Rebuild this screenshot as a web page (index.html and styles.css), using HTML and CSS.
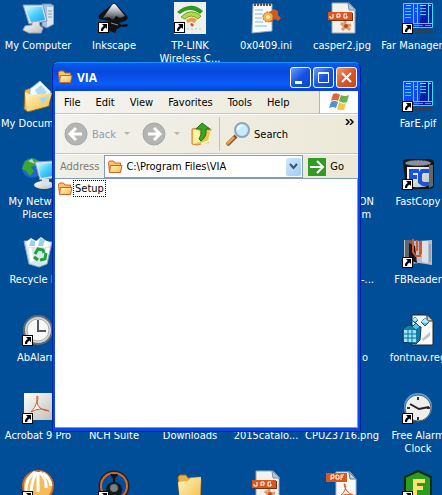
FILE: index.html
```
<!DOCTYPE html>
<html lang="en">

<head>
  <meta charset="UTF-8" />
  <meta name="viewport" content="width=device-width, initial-scale=1.0" />
  <title>VIA</title>
  <link rel="stylesheet" href="styles.css">
</head>

<body>
  <!-- shared icons -->
  <svg class="defs" aria-hidden="true">
    <defs>
      <linearGradient id="gFolder" x1="0" y1="0" x2="1" y2="1">
        <stop offset="0" stop-color="#fff6c0" />
        <stop offset="1" stop-color="#f0bd48" />
      </linearGradient>
      <linearGradient id="gScreen" x1="0" y1="0" x2="1" y2="1">
        <stop offset="0" stop-color="#d8fbff" />
        <stop offset="0.5" stop-color="#48d0ff" />
        <stop offset="1" stop-color="#2499e8" />
      </linearGradient>
      <linearGradient id="gMetal" x1="0" y1="0" x2="1" y2="1">
        <stop offset="0" stop-color="#ffffff" />
        <stop offset="1" stop-color="#bdbdb8" />
      </linearGradient>
      <linearGradient id="gInk" x1="0" y1="0" x2="0" y2="1">
        <stop offset="0" stop-color="#ffffff" />
        <stop offset="0.5" stop-color="#a0a8b0" />
        <stop offset="1" stop-color="#333333" />
      </linearGradient>
    </defs>
    <symbol id="arrow" viewBox="0 0 11 11">
      <path d="M0 0h11v11H0z" fill="#000" />
      <path d="M1 1h9v9H1z" fill="#fff" />
      <path d="M4 2h5v5L7.500 5.500Q5 6.500 5 9H3Q2.500 6 5.800 3.900z" fill="#000" />
    </symbol>
    <symbol id="folder" viewBox="0 0 16 16">
      <path d="M1.500 3.500l1-1.500h4l1.500 2h5.500v9h-11z" fill="#f5c860" stroke="#d0602a" />
      <path d="M3.500 6.500h11.500l-1.500 7h-11z" fill="url(#gFolder)" stroke="#d0602a" />
    </symbol>
    <symbol id="computer" viewBox="0 0 32 32">
      <path d="M20 2l9 0 3 2v18l-7 4-5-2z" fill="#a9c1dd" stroke="#718eb5" />
      <path d="M25 5h6v17l-6 3z" fill="#dde4ed" />
      <path d="M26 9h4M26 12h4M26 15h4" stroke="#86a0bf" />
      <path d="M1 3l20 0 4 16-18 3z" fill="#d6e5f4" stroke="#8199b7" />
      <path d="M3 5l17 0 3 13-14 2z" fill="url(#gScreen)" />
      <path d="M10 20l7-1 1 5 3 2-2 5-12 0-6-3 2-4 7-1z" fill="url(#gMetal)" stroke="#a0a4ad" />
    </symbol>
    <symbol id="jpg" viewBox="0 0 32 32">
      <path d="M6 1h17l6 6v24H6z" fill="#f1f1ee" stroke="#9ea5ae" />
      <path d="M22 1l1 7 7 0z" fill="#b9c6d7" stroke="#7591b1" />
      <path d="M18 24l-3-3m4 3l0-5m1 5l5-1m-5 1l4 4m-4-4l-4 4" stroke="#e29a65" stroke-width="3" />
      <circle cx="20" cy="24" r="2" fill="#b84c20" />
      <path d="M3 11h24v8H3z" fill="#7e2e0e" />
      <path d="M2 10h24v8H2z" fill="#d7591f" />
      <path d="M7 12v4H4v-2M11 16v-4h3v3h-3M21 12h-3v4h3v-2h-1" fill="none" stroke="#fff" />
    </symbol>
    <symbol id="far" viewBox="0 0 32 32">
      <path d="M1 1h30v24H1z" fill="#0b4cf2" />
      <path d="M21 1h10v24H17z" fill="#0a1ca3" />
      <path d="M1.500 1.500h29v24h-29zM1 21.500h30M11.500 1v20M15.500 1v20M26.500 1v20" fill="none" stroke="#35dff4" />
      <path d="M4 3.500h5M18 3.500h6M27 3.500h2" stroke="#e6d860" />
      <path d="M3 6.500h6M3 9.500h6M3 12.500h6M3 15.500h6M18 6.500h6M18 9.500h6M18 12.500h6M13 6.500h2M13 9.500h2" stroke="#35d8f0" />
      <path d="M12 23.500h9M23 23.500h6" stroke="#20a8ff" />
      <path d="M12 28.500h18M13 30.500h18" stroke="#333d48" stroke-dasharray="3 1" />
    </symbol>
    <symbol id="clock" viewBox="0 0 32 32">
      <circle cx="16" cy="16" r="14" fill="#d6d8d8" stroke="#696d72" stroke-width="2" />
      <circle cx="16" cy="16" r="11" fill="#f8f8f5" stroke="#aaaeb2" />
      <path d="M16 6v11h8" fill="none" stroke="#556" stroke-width="2" />
    </symbol>
    <symbol id="bigfolder" viewBox="0 0 32 32">
      <path d="M4 7l2-2h6l2 3 11-1 2 2-1 22-20 1z" fill="#e9b344" stroke="#a66b20" />
      <path d="M4 12l10-1 3-3 10-1-1 23-20 1z" fill="url(#gFolder)" />
    </symbol>
  </svg>

  <main class="desktop">
    <a class="shortcut" href="#">
      <svg class="icon"><use href="#computer" /></svg>
      <span class="label">My Computer</span>
    </a>
    <a class="shortcut" href="#">
      <svg class="icon" viewBox="0 0 32 32">
        <path d="M13 3q3-3 6 0l10 11q2 3-2 5l-6 2 4 3-6 3-2 4-7-3-3-5 3-4-8-2q-3-2 0-5z" fill="#111" />
        <path d="M14 3q2-2 4 0l9 11-5 2-4-2-3 4-4-3-6 1z" fill="url(#gInk)" />
        <path d="M24 23l5-1 1 2-5 1z" fill="#000" />
        <path d="M13 21l7 2" stroke="#8b9299" />
        <use href="#arrow" y="20" width="11" height="11" />
      </svg>
      <span class="label">Inkscape</span>
    </a>
    <a class="shortcut" href="#">
      <svg class="icon" viewBox="0 0 32 32">
        <path d="M0 0h32v32H0z" fill="#f0efe9" />
        <path d="M3 10Q17-2 29 9l-3 3Q16 4 6 12z" fill="#289b20" />
        <path d="M7 15Q17 5 27 14l-3 3q-7-6-13 0z" fill="#b7d64b" stroke="#6da82a" />
        <path d="M12 18q7-5 11 0l-3 3q-3-3-6 0z" fill="#ec9c42" />
        <path d="M16 22l2-1 2 2-2 2z" fill="#d94f24" />
        <path d="M13 27h16" stroke="#8ccde8" stroke-dasharray="2 2" />
        <use href="#arrow" y="20" width="11" height="11" />
      </svg>
      <span class="label">TP-LINK Wireless&nbsp;C...</span>
    </a>
    <a class="shortcut" href="#">
      <svg class="icon" viewBox="0 0 32 32">
        <path d="M3 2h19v27l-20 2z" fill="#fafafa" stroke="#8babc4" />
        <path d="M4 2.500h18" stroke="#744b38" stroke-width="3" stroke-dasharray="2 1" />
        <path d="M5 8h8M5 12h8M5 16h7M5 20h8M5 24h12" stroke="#75bbe8" />
        <path d="M21 9l3-2 4 2 0 4 3 3-3 3-3-2-4 3-5-1-2-4 3-4z" fill="#cf5a20" />
        <circle cx="18" cy="15" r="5" fill="#f2b24d" stroke="#b75b1e" stroke-dasharray="2 1" />
        <circle cx="18" cy="15" r="2" fill="#fff0bd" />
      </svg>
      <span class="label">0x0409.ini</span>
    </a>
    <a class="shortcut" href="#">
      <svg class="icon"><use href="#jpg" /></svg>
      <span class="label">casper2.jpg</span>
    </a>
    <a class="shortcut" href="#">
      <svg class="icon" viewBox="0 0 32 32"><use href="#far" /><use href="#arrow" y="21" width="11" height="11" /></svg>
      <span class="label wide">Far&nbsp;Manager</span>
    </a>

    <a class="shortcut first" href="#">
      <svg class="icon" viewBox="0 0 32 32">
        <path d="M3 10l6-2 20 5-2 13-21 6-4-3z" fill="#edbd50" stroke="#8d6525" />
        <path d="M8 9l10-8 11 11-8 11-13 3z" fill="#f8fcff" stroke="#8eb8df" />
        <path d="M13 10l6-5 6 7-7 7z" fill="#aadafa" />
        <path d="M3 12l6 3 21-2-4 13-21 5z" fill="url(#gFolder)" />
        <path d="M17 18l10-2-6 8z" fill="#a9d9f1" />
      </svg>
      <span class="label">My Documents</span>
    </a>
    <a class="shortcut last" href="#">
      <svg class="icon" viewBox="0 0 32 32"><use href="#far" /><use href="#arrow" y="21" width="11" height="11" /></svg>
      <span class="label">FarE.pif</span>
    </a>

    <a class="shortcut first" href="#">
      <svg class="icon" viewBox="0 0 32 32">
        <circle cx="10" cy="10" r="10" fill="#1e65cc" />
        <path d="M3 3l7-3 7 3-3 4-5 2 3 4-4 5-4-5-4-2z" fill="#36a92e" />
        <path d="M6 3l4-2 3 5z" fill="#c4ccd0" />
        <path d="M13 4l18-1 1 17-14 2z" fill="#d4e6f7" stroke="#7e9dc1" />
        <path d="M15 6l16-1v13l-12 2z" fill="url(#gScreen)" />
        <ellipse cx="22" cy="27" rx="10" ry="4" fill="url(#gMetal)" />
        <path d="M20 21h7v6h-7z" fill="#d9dfe5" />
      </svg>
      <span class="label">My Network Places</span>
    </a>
    <span class="shortcut tail"><span class="label">ON<br>m</span></span>
    <a class="shortcut last" href="#">
      <svg class="icon" viewBox="0 0 32 32">
        <path d="M1 5q0-4 6-4h19q6 0 6 4v22q0 4-6 4H4z" fill="#151515" />
        <path d="M5 9h23v18q-9 4-23 1z" fill="url(#gMetal)" />
        <path d="M27 7h4v21l-4 2z" fill="#666" />
        <ellipse cx="16" cy="5" rx="13" ry="3" fill="#8b929a" stroke="#333" stroke-dasharray="2 1" />
        <path d="M17 13H9v14M9 19h6M27 13h-7l-2 3v8l3 2h6" fill="none" stroke="#1755dc" stroke-width="4" />
        <use href="#arrow" y="21" width="11" height="11" />
      </svg>
      <span class="label">FastCopy</span>
    </a>

    <a class="shortcut first" href="#">
      <svg class="icon" viewBox="0 0 32 32">
        <path d="M2 5l28 1-5 22-8 3-10-3z" fill="#d4e9f3" stroke="#8caac0" />
        <path d="M4 6l5-4 5 3 5-4 4 3 6 3-4 4H6z" fill="#fff" />
        <path d="M9 4l4 1v5H7zM18 2l5 2-2 6h-5z" fill="#9bcff2" />
        <path d="M8 12l2 14M26 12l-3 14" stroke="#fff" stroke-width="3" />
        <path d="M13 18l3-5 5 1 1 3M24 17l-1 6-5 1M16 24l-4-3" fill="none" stroke="#249f30" stroke-width="3" />
      </svg>
      <span class="label">Recycle Bin</span>
    </a>
    <span class="shortcut tail"><span class="label">-...</span></span>
    <a class="shortcut last" href="#">
      <svg class="icon" viewBox="0 0 32 32">
        <path d="M2 4l14 1 14-1v25l-13-2-15 2z" fill="#b8bec5" />
        <path d="M3 4l8 0 1 24H3z" fill="#62666b" />
        <path d="M7 7l6 3 2 17-8-3z" fill="#17181c" />
        <path d="M11 3v13l3 4h4V5M15 4v11M19 5v13" fill="none" stroke="#d3562c" stroke-width="2" />
        <path d="M20 5h6v22l-6-1z" fill="#dbe1e6" />
        <path d="M28 8v18" stroke="#788594" />
        <use href="#arrow" y="21" width="11" height="11" />
      </svg>
      <span class="label">FBReader</span>
    </a>

    <a class="shortcut first" href="#">
      <svg class="icon" viewBox="0 0 32 32"><use href="#clock" /><use href="#arrow" y="21" width="11" height="11" /></svg>
      <span class="label">AbAlarm</span>
    </a>
    <span class="shortcut tail short"><span class="label">o</span></span>
    <a class="shortcut last" href="#">
      <svg class="icon" viewBox="0 0 32 32">
        <path d="M10 1h15l6 6v24H10z" fill="#fafafa" stroke="#222" />
        <path d="M25 1v6h6" fill="#ccc" stroke="#222" />
        <path d="M20 25l8-7v4l-7 5z" fill="#c1c1c1" />
        <path d="M1 15l5-4 13 2-1 13-4 4-13-2z" fill="#147da8" stroke="#093958" />
        <path d="M2 16h12v12H2z" fill="#9be5fa" />
        <path d="M1 20h14M1 24h14M6 16v12M10 16v12M14 16l4-3M14 20l4-3M14 24l4-3" stroke="#087099" />
        <path d="M13 3l3 3-3 3-3-3zM23 4l4 4-4 4-4-4zM14 9l4 4-4 3-4-3z" fill="#4ec3e9" stroke="#105b86" />
        <path d="M13 3l3 3-3 1-3-1zM23 4l4 4-4 1-4-1z" fill="#b1effc" />
      </svg>
      <span class="label">fontnav.reg</span>
    </a>

    <a class="shortcut first" href="#">
      <svg class="icon" viewBox="0 0 32 32">
        <path d="M2 1h30v27H2z" fill="url(#gMetal)" />
        <path d="M15 4q2 0 0 6-2 6-6 10 5-3 10-3 5 0 8 2-5 0-9-3-4-4-3-12z" fill="#fff" stroke="#d55a2b" />
        <use href="#arrow" y="21" width="11" height="11" />
      </svg>
      <span class="label">Acrobat&nbsp;9&nbsp;Pro</span>
    </a>
    <a class="shortcut" href="#"><svg class="icon"></svg><span class="label">NCH Suite</span></a>
    <a class="shortcut" href="#"><svg class="icon"></svg><span class="label">Downloads</span></a>
    <a class="shortcut" href="#"><svg class="icon"></svg><span class="label">2015catalo...</span></a>
    <a class="shortcut" href="#"><svg class="icon"></svg><span class="label">CPUZ3716.png</span></a>
    <a class="shortcut" href="#">
      <svg class="icon" viewBox="0 0 32 32">
        <circle cx="16" cy="15" r="14" fill="#5aa0d8" />
        <circle cx="16" cy="16" r="13" fill="#eeeeea" stroke="#555f68" />
        <path d="M16 5v3M16 25v3M5 16h3M25 16h3" stroke="#333" stroke-width="2" />
        <path d="M8 12l9 5 10-2" fill="none" stroke="#222" stroke-width="2" />
        <use href="#arrow" y="21" width="11" height="11" />
      </svg>
      <span class="label">Free Alarm Clock</span>
    </a>

    <a class="shortcut" href="#" aria-label="Player">
      <svg class="icon" viewBox="0 0 32 32">
        <circle cx="16" cy="16" r="15" fill="#f4bc59" stroke="#d66122" stroke-width="2" />
        <path d="M13 2Q3 8 4 24M15 2Q9 10 9 26M16 2v20M18 2q7 8 6 16M21 3q7 5 8 13" fill="none" stroke="#fff" stroke-width="3" />
        <use href="#arrow" y="21" width="11" height="11" />
      </svg>
    </a>
    <a class="shortcut" href="#" aria-label="Recorder">
      <svg class="icon" viewBox="0 0 32 32">
        <circle cx="16" cy="16" r="14" fill="none" stroke="#222" stroke-width="3" />
        <circle cx="16" cy="16" r="13" fill="none" stroke="#da6833" stroke-width="2" />
        <path d="M12 4h8l-3 5v3h-2V9z" fill="#111" />
        <circle cx="16" cy="20" r="8" fill="#15191c" />
        <circle cx="16" cy="18" r="4" fill="#788286" stroke="#3c4244" stroke-dasharray="1 1" />
        <use href="#arrow" y="21" width="11" height="11" />
      </svg>
    </a>
    <a class="shortcut" href="#" aria-label="Folder"><svg class="icon"><use href="#bigfolder" /></svg></a>
    <a class="shortcut" href="#" aria-label="Image"><svg class="icon"><use href="#jpg" /></svg></a>
    <a class="shortcut" href="#" aria-label="PDF document">
      <svg class="icon" viewBox="0 0 32 32">
        <path d="M10 2h14l6 7v23H10z" fill="#fafaf8" stroke="#b1b7bf" />
        <path d="M23 2l1 7h6z" fill="#c2ced9" stroke="#617c9c" />
        <path d="M18 14q3 0 1 6-2 4-5 6 6-3 13-1-8-3-9-11z" fill="none" stroke="#d55424" />
        <path d="M0 3h21v9H0z" fill="#d7591f" />
        <path d="M5 10V5h3v3H5M10 5h2l1 1v3h-3zM15 10V5h3M15 7h2" fill="none" stroke="#fff" />
      </svg>
    </a>
    <a class="shortcut" href="#" aria-label="F">
      <svg class="icon" viewBox="0 0 32 32">
        <path d="M16 1l13 6v22l-13 3-13-3V7z" fill="#2d9b20" stroke="#102d12" stroke-width="2" />
        <path d="M23 11H13v18M13 18h8" fill="none" stroke="#ffe072" stroke-width="4" />
        <use href="#arrow" y="21" width="11" height="11" />
      </svg>
    </a>
  </main>

  <section class="window">
    <header class="titlebar">
      <svg class="small"><use href="#folder" /></svg>
      <h1>VIA</h1>
      <button class="control" aria-label="Minimize"><svg viewBox="0 0 19 19"><path d="M4 13h7v3H4z" fill="#fff" /></svg></button>
      <button class="control" aria-label="Maximize"><svg viewBox="0 0 19 19"><path d="M4.500 4.500h10v10h-10zM4 5.500h11" fill="none" stroke="#fff" /></svg></button>
      <button class="control close" aria-label="Close"><svg viewBox="0 0 19 19"><path d="M5 5l9 9M14 5l-9 9" stroke="#fff" stroke-width="2" /></svg></button>
    </header>

    <nav class="menubar">
      <button>File</button>
      <button>Edit</button>
      <button>View</button>
      <button>Favorites</button>
      <button>Tools</button>
      <button>Help</button>
      <div class="flag">
        <svg viewBox="0 0 20 18">
          <path d="M4 1q4-2 7 1L9 8q-3-2-7 0z" fill="#e1673b" />
          <path d="M12 2q4 2 8 0l-2 7q-4 2-8-1z" fill="#62b54a" />
          <path d="M2 9q3-2 7 0l-2 6q-3-2-7 0z" fill="#4f91d2" />
          <path d="M10 9q4 3 7 1l-2 7q-4 1-7-1z" fill="#f1c64f" />
        </svg>
      </div>
    </nav>

    <div class="toolbar">
      <button class="back" disabled>
        <svg class="round" viewBox="0 0 24 24">
          <circle cx="12" cy="12" r="11" fill="#b5b5b1" stroke="#a0a8b2" />
          <path d="M18 12H7M12 6l-6 6 6 6" fill="none" stroke="#fff" stroke-width="3" />
        </svg>
        Back
      </button>
      <button class="drop" aria-label="Back list" disabled><svg viewBox="0 0 6 4"><path d="M0 0h6L3 3z" fill="#b5b5b0" /></svg></button>
      <button class="forward" aria-label="Forward" disabled>
        <svg class="round" viewBox="0 0 24 24">
          <circle cx="12" cy="12" r="11" fill="#b5b5b1" stroke="#a0a8b2" />
          <path d="M6 12h11M12 6l6 6-6 6" fill="none" stroke="#fff" stroke-width="3" />
        </svg>
      </button>
      <button class="drop" aria-label="Forward list" disabled><svg viewBox="0 0 6 4"><path d="M0 0h6L3 3z" fill="#b5b5b0" /></svg></button>
      <button class="up" aria-label="Up">
        <svg viewBox="0 0 22 24">
          <path d="M1 7l5-1 3 2 11-1-2 13-12 3-5-1z" fill="#f1c34e" stroke="#d88035" />
          <path d="M2 8l5 0 2 2 0 10-7 2z" fill="#fff1a5" />
          <path d="M20 9l-2 10-8 3" fill="none" stroke="#fff5c6" stroke-width="2" />
          <path d="M11 1l8 6h-4q1 8-5 12l-2-2q3-4 2-10H5z" fill="#35a821" stroke="#24731b" />
        </svg>
      </button>
      <button class="search">
        <svg viewBox="0 0 24 24">
          <path d="M10 14l-9 9" stroke="#77583c" stroke-width="4" />
          <path d="M8 15l-7 7" stroke="#f29b3d" stroke-width="3" />
          <circle cx="16" cy="8" r="7" fill="#c6eafe" stroke="#91a4bd" stroke-width="2" />
          <path d="M12 8q0-4 4-4" fill="none" stroke="#fff" stroke-width="2" />
        </svg>
        Search
      </button>
      <button class="more" aria-label="More buttons"><svg viewBox="0 0 9 6"><path d="M1 0l3 3-3 3M5 0l3 3-3 3" fill="none" stroke="#000" stroke-width="1.500" /></svg></button>
    </div>

    <form class="addressbar">
      <label for="address">Address</label>
      <div class="combo">
        <svg class="small"><use href="#folder" /></svg>
        <input type="text" id="address" value="C:\Program Files\VIA">
        <button type="button" aria-label="Show addresses"><svg viewBox="0 0 9 7"><path d="M1 1l3.500 4L8 1" fill="none" stroke="#315780" stroke-width="2" /></svg></button>
      </div>
      <button type="button" class="go">
        <svg viewBox="0 0 18 18">
          <path d="M0 0h18v18H0z" fill="#329b27" />
          <path d="M2 9h12M9 3l6 6-6 6" fill="none" stroke="#fff" stroke-width="2" />
        </svg>
        Go
      </button>
    </form>

    <div class="files">
      <a class="file" href="#">
        <svg class="small"><use href="#folder" /></svg>
        <span>Setup</span>
      </a>
    </div>
  </section>
</body>

</html>
```
FILE: styles.css
```
* {
  box-sizing: border-box;
}
body {
  margin: 0;
  height: 100vh;
  overflow: hidden;
  position: relative;
  background: #004e98;
  font-family: "DejaVu Sans Condensed", "DejaVu Sans", sans-serif;
  font-size: 11px;
  line-height: 13px;
}
button, input {
  font: inherit;
  color: #000;
  background: none;
  border: 0;
  padding: 0;
  margin: 0;
}
svg {
  display: block;
  flex: none;
}
a {
  color: inherit;
  text-decoration: none;
}
.defs {
  position: absolute;
  width: 0;
  height: 0;
}

/* desktop */
.desktop {
  display: grid;
  grid-template-columns: repeat(6, 76px);
  grid-auto-rows: 78px;
  height: 100%;
  overflow: hidden;
}
.shortcut {
  display: flex;
  flex-direction: column;
  align-items: center;
  gap: 5px;
  padding-top: 2px;
  color: #fff;
  text-align: center;
}
.icon {
  width: 32px;
  height: 32px;
}
.label {
  max-width: 76px;
}
.wide {
  margin-right: 12px;
}
.first {
  grid-column: 1;
}
.last {
  grid-column: 6;
}
.tail {
  grid-column: 5;
  align-items: flex-end;
  padding-top: 39px;
  padding-right: 6px;
}
.short {
  padding-right: 12px;
}

/* explorer window */
.window {
  position: absolute;
  left: 52px;
  right: 81px;
  top: 62px;
  bottom: 63px;
  display: flex;
  flex-direction: column;
  padding: 0 2px 3px;
  background: #0848e0;
  border: 1px solid #0020a8;
  border-top-color: #1c8cff;
  border-radius: 7px 7px 0 0;
}
.titlebar {
  display: flex;
  align-items: center;
  gap: 2px;
  height: 28px;
  margin: 0 -2px;
  padding: 0 3px 0 4px;
  border-radius: 6px 6px 0 0;
  background: linear-gradient(#0a5cf0, #0648dc 30%, #0a5cf8 75%, #0540d0);
}
.titlebar h1 {
  flex: 1;
  margin: 0 0 0 2px;
  color: #fff;
  font-family: "Open Sans", sans-serif;
  font-size: 12px;
  font-weight: bold;
}
.small {
  width: 16px;
  height: 16px;
}
.control {
  width: 21px;
  height: 21px;
  border: 1px solid #fff;
  border-radius: 3px;
  background: linear-gradient(135deg, #6f9cf4, #1554e4 50%, #0a46d0);
}
.close {
  background: linear-gradient(135deg, #f09a76, #d9562a 50%, #c8481c);
}
.menubar {
  display: flex;
  align-items: center;
  gap: 15px;
  height: 23px;
  padding-left: 9px;
  background: linear-gradient(to right, #f4f3ef, #ece9d8);
  border-bottom: 1px solid #c9c6b8;
}
.flag {
  display: flex;
  align-items: center;
  justify-content: center;
  width: 39px;
  height: 22px;
  margin-left: auto;
  background: #fff;
  border-left: 1px solid #b8b5a6;
}
.flag svg {
  width: 20px;
  height: 18px;
}
.toolbar {
  display: flex;
  align-items: center;
  height: 40px;
  padding-left: 9px;
  background: linear-gradient(to right, #f2f1ec, #ece9d8);
  border-top: 1px solid #fff;
  border-bottom: 1px solid #c9c6b8;
}
.back, .search, .go {
  display: flex;
  align-items: center;
  gap: 4px;
}
.back {
  color: #8e9bb0;
}
.round, .search svg {
  width: 24px;
  height: 24px;
}
.drop {
  margin: 0 9px 0 8px;
}
.drop svg {
  width: 6px;
  height: 4px;
}
.forward {
  margin-left: 3px;
}
.up {
  margin-left: 2px;
  padding-right: 6px;
  border-right: 1px solid #c5c2b4;
}
.up svg {
  width: 22px;
  height: 34px;
}
.search {
  margin-left: 6px;
}
.more {
  align-self: flex-start;
  margin: 4px 4px 0 auto;
}
.more svg {
  width: 9px;
  height: 6px;
}
.addressbar {
  display: flex;
  align-items: center;
  gap: 5px;
  height: 24px;
  padding-left: 5px;
  background: linear-gradient(to right, #f0efe8, #ece9d8);
  border-top: 1px solid #fff;
}
.addressbar label {
  color: #7c7b74;
}
.combo {
  flex: 1;
  display: flex;
  align-items: center;
  gap: 3px;
  min-width: 0;
  height: 23px;
  padding: 1px 1px 1px 2px;
  background: #fff;
  border: 1px solid #7f9db9;
}
.combo input {
  flex: 1;
  min-width: 0;
  outline: none;
}
.combo button {
  display: flex;
  align-items: center;
  justify-content: center;
  width: 15px;
  height: 18px;
  border-radius: 2px;
  background: linear-gradient(135deg, #d4e8fc, #a0ccf4);
}
.combo button svg {
  width: 9px;
  height: 7px;
}
.go {
  margin-right: 14px;
}
.go svg {
  width: 18px;
  height: 18px;
}
.files {
  flex: 1;
  padding: 1px 2px;
  background: #fff;
  border: 1px solid #7f9db9;
  border-left: 0;
}
.file {
  display: inline-flex;
  align-items: center;
}
.file span {
  padding: 1px;
  border: 1px dotted #000;
}
```
